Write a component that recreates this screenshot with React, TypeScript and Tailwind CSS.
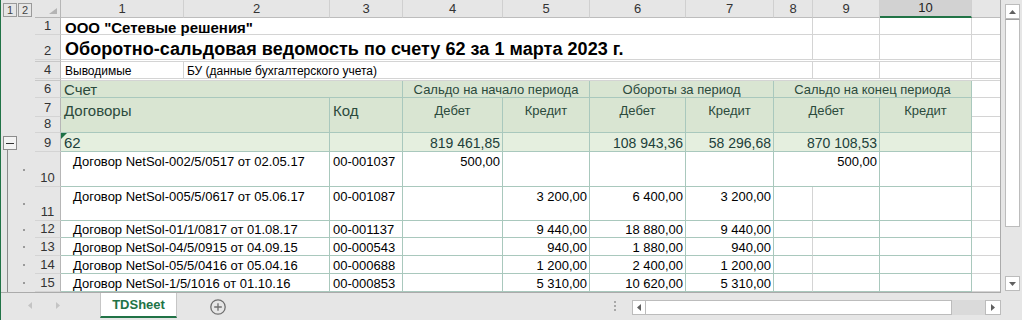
import React from 'react'

const GRID = 'border-[#d4d4d4]'
const LINE = 'border-[#a9c8bd]'
const HEAD = 'bg-[#d9e5d2] text-[#2b4a3c]'
const TOTAL = 'bg-[#e5efdf] text-[#21403a]'

type Gutter = 'none' | 'minus' | 'child'

function Side({ n, gutter = 'none', h = '' }: { n?: string; gutter?: Gutter; h?: string }) {
  return (
    <div className={`flex shrink-0 bg-[#e6e6e6] ${h}`}>
      <div className="flex w-[34px]">
        {gutter === 'minus' && (
          <div className="flex flex-col pl-[2px] pt-[3px]">
            <div className="flex h-[14px] w-[14px] items-center justify-center border border-[#8c8c8c] bg-[#f3f3f3]">
              <div className="h-px w-[8px] bg-[#333]" />
            </div>
            <div className="ml-[4px] w-px flex-1 bg-[#8c8c8c]" />
          </div>
        )}
        {gutter === 'child' && (
          <>
            <div className="ml-[6px] w-px bg-[#8c8c8c]" />
            <div className="ml-[15px] h-[2px] w-[2px] self-center bg-[#9a9a9a]" />
          </>
        )}
      </div>
      <div className="flex w-[26px] items-end justify-center border-r border-b border-r-[#b6b6b6] border-b-[#d4d4d4] pb-px text-[13px] leading-[15px] text-[#333]">
        {n}
      </div>
    </div>
  )
}

function Hidden() {
  return (
    <div className="flex h-[2px]">
      <div className="w-[34px] shrink-0 bg-[#e6e6e6]" />
      <div className="w-[26px] shrink-0 border-r border-b border-r-[#b6b6b6] border-b-[#c8c8c8] bg-[#e6e6e6]" />
      <div className="flex-1 border-b border-[#d4d4d4]" />
    </div>
  )
}

const cols = [
  { n: '1', w: 'w-[123px]' },
  { n: '2', w: 'w-[146px]' },
  { n: '3', w: 'w-[73px]' },
  { n: '4', w: 'w-[100px]' },
  { n: '5', w: 'w-[87px]' },
  { n: '6', w: 'w-[96px]' },
  { n: '7', w: 'w-[88px]' },
  { n: '8', w: 'w-[39px]' },
  { n: '9', w: 'w-[67px]' },
]

type Line = {
  n: string
  h: string
  name: string
  code: string
  d1?: string
  k1?: string
  d2?: string
  k2?: string
  d3?: string
  top?: boolean
}

const lines: Line[] = [
  { n: '10', h: 'h-[35px]', name: 'Договор NetSol-002/5/0517 от 02.05.17', code: '00-001037', d1: '500,00', d3: '500,00', top: true },
  { n: '11', h: 'h-[34px]', name: 'Договор NetSol-005/5/0617 от 05.06.17', code: '00-001087', k1: '3 200,00', d2: '6 400,00', k2: '3 200,00', top: true },
  { n: '12', h: 'h-[17px]', name: 'Договор NetSol-01/1/0817 от 01.08.17', code: '00-001137', k1: '9 440,00', d2: '18 880,00', k2: '9 440,00' },
  { n: '13', h: 'h-[18px]', name: 'Договор NetSol-04/5/0915 от 04.09.15', code: '00-000543', k1: '940,00', d2: '1 880,00', k2: '940,00' },
  { n: '14', h: 'h-[18px]', name: 'Договор NetSol-05/5/0416 от 05.04.16', code: '00-000688', k1: '1 200,00', d2: '2 400,00', k2: '1 200,00' },
  { n: '15', h: 'h-[18px]', name: 'Договор NetSol-1/5/1016 от 01.10.16', code: '00-000853', k1: '5 310,00', d2: '10 620,00', k2: '5 310,00' },
]

function DataRow({ row }: { row: Line }) {
  const al = row.top ? 'items-start pt-[2px]' : 'items-end'
  const num = `flex shrink-0 justify-end border-r border-b pr-[2px] ${LINE} ${al}`
  return (
    <div className={`flex text-[13px] leading-[15px] ${row.h}`}>
      <Side n={row.n} gutter="child" />
      <div className={`flex w-[269px] shrink-0 border-r border-b pl-[12px] whitespace-nowrap ${LINE} ${al}`}>{row.name}</div>
      <div className={`flex w-[73px] shrink-0 border-r border-b pl-[3px] ${LINE} ${al}`}>{row.code}</div>
      <div className={`w-[100px] ${num}`}>{row.d1}</div>
      <div className={`w-[87px] ${num}`}>{row.k1}</div>
      <div className={`w-[96px] ${num}`}>{row.d2}</div>
      <div className={`w-[88px] ${num}`}>{row.k2}</div>
      {row.d3 !== undefined ? (
        <div className={`w-[106px] ${num}`}>{row.d3}</div>
      ) : (
        <>
          <div className="w-[39px] shrink-0 border-r border-b border-r-[#d4d4d4] border-b-[#a9c8bd]" />
          <div className={`w-[67px] ${num}`} />
        </>
      )}
      <div className={`w-[92px] ${num}`} />
      <div className={`w-[28px] shrink-0 border-b ${GRID}`} />
    </div>
  )
}

function Arrow({ dir }: { dir: 'up' | 'down' | 'left' | 'right' }) {
  const pts = {
    up: '0,4 7,4 3.5,0',
    down: '0,0 7,0 3.5,4',
    left: '4,0 4,7 0,3.5',
    right: '0,0 0,7 4,3.5',
  }[dir]
  const vertical = dir === 'up' || dir === 'down'
  return (
    <svg width={vertical ? 7 : 4} height={vertical ? 4 : 7}>
      <polygon points={pts} fill="#606060" />
    </svg>
  )
}

function VScroll() {
  return (
    <div className="flex w-[21px] flex-col pt-[4px] pb-[2px] pl-[4px]">
      <div className="flex h-[15px] w-[15px] items-center justify-center border border-[#bcbcbc] bg-white">
        <Arrow dir="up" />
      </div>
      <div className="h-[208px] w-[15px] border border-t-[#a0a0a0] border-[#bcbcbc] bg-white" />
      <div className="flex-1" />
      <div className="flex h-[15px] w-[15px] items-center justify-center border border-[#bcbcbc] bg-white">
        <Arrow dir="down" />
      </div>
    </div>
  )
}

function TabBar() {
  return (
    <div className="flex h-[27px] items-start">
      <div className="flex h-[25px] w-[99px] items-center gap-[24px] pl-[27px]">
        <svg width="4" height="7">
          <polygon points="4,0 4,7 0,3.5" fill="#c4c4c4" />
        </svg>
        <svg width="4" height="7">
          <polygon points="0,0 0,7 4,3.5" fill="#c4c4c4" />
        </svg>
      </div>
      <div className="flex h-[25px] w-[77px] items-center justify-center border-x border-b-2 border-x-[#c6c6c6] border-b-[#217346] bg-white text-[13px] font-bold text-[#217346]">
        TDSheet
      </div>
      <div className="mt-[6px] ml-[33px]">
        <svg width="16" height="16" viewBox="0 0 16 16">
          <circle cx="8" cy="8" r="7.2" fill="none" stroke="#6f6f6f" strokeWidth="1.3" />
          <path d="M8 4.2v7.6M4.2 8h7.6" stroke="#6f6f6f" strokeWidth="1.3" />
        </svg>
      </div>
      <div className="mt-[8px] ml-[388px] flex flex-col gap-[2px]">
        <div className="h-[2px] w-[2px] bg-[#a8a8a8]" />
        <div className="h-[2px] w-[2px] bg-[#a8a8a8]" />
        <div className="h-[2px] w-[2px] bg-[#a8a8a8]" />
      </div>
      <div className="mt-[7px] ml-[16px] flex h-[15px]">
        <div className="flex w-[14px] items-center justify-center border border-[#bcbcbc] bg-white">
          <Arrow dir="left" />
        </div>
        <div className="w-[306px] border-y border-r border-[#bcbcbc] bg-white" />
        <div className="w-[33px] bg-[#dadada]" />
        <div className="flex w-[16px] items-center justify-center border border-[#bcbcbc] bg-white">
          <Arrow dir="right" />
        </div>
      </div>
    </div>
  )
}

export default function App() {
  return (
    <div className="flex h-[320px] w-[1022px] flex-col overflow-hidden border-l border-[#217346] bg-[#e6e6e6] font-['Liberation_Sans',Arial,sans-serif] text-black">
      <div className="flex h-[293px]">
        <div className="flex w-[1000px] flex-col border-r border-b border-[#ababab] bg-white">
          {/* column letters */}
          <div className="flex h-[18px] shrink-0 bg-[#e6e6e6] text-[13px] text-[#333]">
            <div className="flex w-[34px] shrink-0 gap-px pt-[3px] pl-[2px]">
              <div className="flex h-[14px] w-[14px] items-center justify-center border border-[#9a9a9a] text-[11px] leading-none text-[#444]">1</div>
              <div className="flex h-[14px] w-[14px] items-center justify-center border border-[#9a9a9a] text-[11px] leading-none text-[#444]">2</div>
            </div>
            <div className="flex w-[26px] shrink-0 items-end justify-end border-r border-b border-[#b6b6b6] pr-[3px] pb-[3px]">
              <svg width="8" height="6">
                <polygon points="8,0 8,6 0,6" fill="#b4b4b4" />
              </svg>
            </div>
            {cols.map((c) => (
              <div key={c.n} className={`flex shrink-0 items-center justify-center border-r border-b border-r-[#d0d0d0] border-b-[#bdbdbd] ${c.w}`}>
                {c.n}
              </div>
            ))}
            <div className="flex w-[92px] shrink-0 items-center justify-center border-r border-b-2 border-r-[#d0d0d0] border-b-[#217346] bg-[#d2d2d2] text-[#222]">
              10
            </div>
            <div className="w-[28px] shrink-0 border-b border-[#bdbdbd]" />
          </div>

          {/* title rows */}
          <div className="flex h-[17px] shrink-0">
            <Side n="1" />
            <div className={`flex w-[752px] shrink-0 items-end border-r border-b pl-[4px] text-[15px] leading-[12px] font-bold whitespace-nowrap ${GRID}`}>
              ООО "Сетевые решения"
            </div>
            <div className={`w-[67px] shrink-0 border-r border-b ${GRID}`} />
            <div className={`w-[92px] shrink-0 border-r border-b ${GRID}`} />
            <div className={`w-[28px] shrink-0 border-b ${GRID}`} />
          </div>
          <div className="flex h-[25px] shrink-0">
            <Side n="2" />
            <div className={`flex w-[752px] shrink-0 items-end border-r border-b pb-px pl-[4px] text-[18px] leading-[17px] font-bold tracking-[0.05px] whitespace-nowrap ${GRID}`}>
              Оборотно-сальдовая ведомость по счету 62 за 1 марта 2023 г.
            </div>
            <div className={`w-[67px] shrink-0 border-r border-b ${GRID}`} />
            <div className={`w-[92px] shrink-0 border-r border-b ${GRID}`} />
            <div className={`w-[28px] shrink-0 border-b ${GRID}`} />
          </div>
          <Hidden />
          <div className="flex h-[17px] shrink-0 text-[12px] leading-[14px]">
            <Side n="4" />
            <div className={`flex w-[123px] shrink-0 items-end border-r border-b pl-[4px] ${GRID}`}>Выводимые</div>
            <div className={`flex w-[629px] shrink-0 items-end border-r border-b pl-[3px] ${GRID}`}>
              БУ (данные бухгалтерского учета)
            </div>
            <div className={`w-[67px] shrink-0 border-r border-b ${GRID}`} />
            <div className={`w-[92px] shrink-0 border-r border-b ${GRID}`} />
            <div className={`w-[28px] shrink-0 border-b ${GRID}`} />
          </div>
          <Hidden />

          {/* table header */}
          <div className="flex h-[17px] shrink-0 text-[13px] leading-[15px]">
            <Side n="6" />
            <div className={`flex w-[342px] shrink-0 items-center border-r border-b pl-[3px] text-[15px] ${HEAD} ${LINE}`}>Счет</div>
            <div className={`flex w-[187px] shrink-0 items-center justify-center border-r border-b ${HEAD} ${LINE}`}>
              Сальдо на начало периода
            </div>
            <div className={`flex w-[184px] shrink-0 items-center justify-center border-r border-b ${HEAD} ${LINE}`}>
              Обороты за период
            </div>
            <div className={`flex w-[198px] shrink-0 items-center justify-center border-r border-b ${HEAD} ${LINE}`}>
              Сальдо на конец периода
            </div>
            <div className={`w-[28px] shrink-0 border-b ${GRID}`} />
          </div>
          <div className="flex h-[35px] shrink-0 text-[13px] leading-[15px]">
            <div className="flex flex-col">
              <Side n="7" h="h-[19px]" />
              <Side n="8" h="h-[16px]" />
            </div>
            <div className={`w-[269px] shrink-0 border-r border-b pt-[4px] pl-[3px] text-[15px] leading-[17px] ${HEAD} ${LINE}`}>Договоры</div>
            <div className={`w-[73px] shrink-0 border-r border-b pt-[4px] pl-[3px] text-[15px] leading-[17px] ${HEAD} ${LINE}`}>Код</div>
            <div className={`w-[100px] shrink-0 border-r border-b pt-[5px] text-center ${HEAD} ${LINE}`}>Дебет</div>
            <div className={`w-[87px] shrink-0 border-r border-b pt-[5px] text-center ${HEAD} ${LINE}`}>Кредит</div>
            <div className={`w-[96px] shrink-0 border-r border-b pt-[5px] text-center ${HEAD} ${LINE}`}>Дебет</div>
            <div className={`w-[88px] shrink-0 border-r border-b pt-[5px] text-center ${HEAD} ${LINE}`}>Кредит</div>
            <div className={`w-[106px] shrink-0 border-r border-b pt-[5px] text-center ${HEAD} ${LINE}`}>Дебет</div>
            <div className={`w-[92px] shrink-0 border-r border-b pt-[5px] text-center ${HEAD} ${LINE}`}>Кредит</div>
            <div className="flex w-[28px] shrink-0 flex-col">
              <div className={`h-[19px] border-b ${GRID}`} />
              <div className={`h-[16px] border-b ${GRID}`} />
            </div>
          </div>

          {/* account total */}
          <div className="flex h-[19px] shrink-0 text-[14px] leading-[16px]">
            <Side n="9" gutter="minus" />
            <div className={`relative flex w-[269px] shrink-0 items-end border-r border-b pl-[3px] text-[15px] leading-[17px] ${TOTAL} ${LINE}`}>
              <svg width="6" height="6" className="absolute top-0 left-0">
                <polygon points="0,0 6,0 0,6" fill="#1e7145" />
              </svg>
              62
            </div>
            <div className={`w-[73px] shrink-0 border-r border-b ${TOTAL} ${LINE}`} />
            <div className={`flex w-[100px] shrink-0 items-end justify-end border-r border-b pr-[2px] ${TOTAL} ${LINE}`}>819 461,85</div>
            <div className={`w-[87px] shrink-0 border-r border-b ${TOTAL} ${LINE}`} />
            <div className={`flex w-[96px] shrink-0 items-end justify-end border-r border-b pr-[2px] ${TOTAL} ${LINE}`}>108 943,36</div>
            <div className={`flex w-[88px] shrink-0 items-end justify-end border-r border-b pr-[2px] ${TOTAL} ${LINE}`}>58 296,68</div>
            <div className={`flex w-[106px] shrink-0 items-end justify-end border-r border-b pr-[2px] ${TOTAL} ${LINE}`}>870 108,53</div>
            <div className={`w-[92px] shrink-0 border-r border-b ${TOTAL} ${LINE}`} />
            <div className={`w-[28px] shrink-0 border-b ${GRID}`} />
          </div>

          {lines.map((row) => (
            <DataRow key={row.n} row={row} />
          ))}
        </div>
        <VScroll />
      </div>
      <TabBar />
    </div>
  )
}
